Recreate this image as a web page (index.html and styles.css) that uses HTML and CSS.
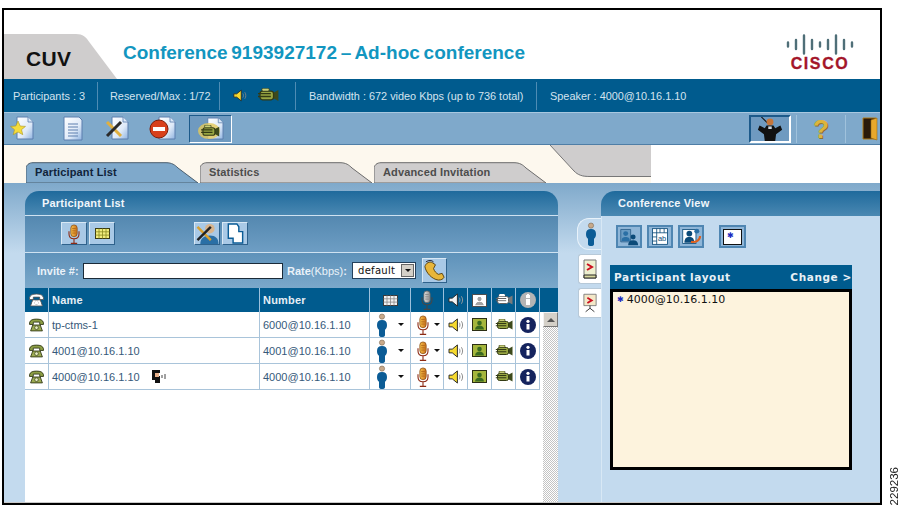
FILE: index.html
```html
<!DOCTYPE html>
<html lang="en">
<head>
<meta charset="utf-8">
<title>CUV Conference</title>
<link rel="stylesheet" href="styles.css">
</head>
<body>
<svg class="defs" width="0" height="0" aria-hidden="true">
  <defs>
    <linearGradient id="docg" x1="0" y1="0" x2="1" y2="1"><stop offset="0" stop-color="#fff"/><stop offset=".6" stop-color="#dfeaf8"/><stop offset="1" stop-color="#8fb3e0"/></linearGradient>
    <linearGradient id="micg" x1="0" y1="0" x2="1" y2="0"><stop offset="0" stop-color="#f7c24a"/><stop offset="1" stop-color="#c9701c"/></linearGradient>
    <symbol id="person" viewBox="0 0 12 24"><circle cx="6" cy="3.6" r="2.6" fill="#c8a98a" stroke="#7a6a55" stroke-width=".6"/><path d="M6 7c3.4 0 5 1.800 5 5 0 2.400-.8 4-2 4.800V22c0 1.400-1 2-3 2s-3-.6-3-2v-5.200C1.800 16 1 14.400 1 12c0-3.200 1.600-5 5-5z" fill="#0b5c96"/></symbol>
    <symbol id="mic" viewBox="0 0 14 22"><path d="M1.500 8v3c0 3.400 2.400 5.200 5.500 5.200s5.500-1.800 5.500-5.200V8M7 16v5M3.500 21.300h7" fill="none" stroke="#8c2a14" stroke-width="1.200"/><rect x="3.500" y="1" width="7" height="13" rx="3.500" fill="url(#micg)" stroke="#8a4a10" stroke-width=".8"/><path d="M5 5h4M5 7.500h4M5 10h4" stroke="#a85f14" stroke-width=".8"/></symbol>
    <symbol id="speaker" viewBox="0 0 17 15"><path d="M1 5.500h3.500L10 1v13L4.500 9.500H1z" fill="#f6d92e" stroke="#222" stroke-width="1"/><path d="M12 5c1 1.500 1 3.500 0 5M14.300 3.500c1.700 2.500 1.700 5.500 0 8" fill="none" stroke="#888" stroke-width="1"/></symbol>
    <symbol id="photo" viewBox="0 0 15 13"><rect x=".5" y=".5" width="14" height="12" fill="#a5b63c" stroke="#2b2e14"/><circle cx="7.500" cy="5" r="2.300" fill="#3a6a20"/><path d="M3 11.500c.5-3 2-4 4.500-4s4 1 4.500 4z" fill="#3a6a20"/></symbol>
    <symbol id="camera" viewBox="0 0 18 12"><path d="M13 4l4.500-2.500v9L13 8z" fill="#3d4a1c"/><rect x="2.500" y="2.500" width="11" height="7" rx="2" fill="#98a642" stroke="#333a14"/><path d="M.8 4.500h10.500M.8 6.800h10.500" stroke="#333a14" stroke-width="1.100"/><rect x="4" y="0" width="6" height="2.500" rx="1" fill="#c9d07a" stroke="#333a14" stroke-width=".7"/></symbol>
    <symbol id="info" viewBox="0 0 16 16"><circle cx="8" cy="8" r="8" fill="#14235e"/><circle cx="8" cy="4.300" r="1.600" fill="#fff"/><path d="M6.500 7h3v5.500h-3z" fill="#fff"/></symbol>
    <symbol id="phone" viewBox="0 0 14 13"><path d="M.5 4.500C1 1.800 3.500 1 7 1s6 .8 6.500 3.500v1.500h-3.500V3.800H4V6H.5z" fill="#8d9f45" stroke="#2c3314" stroke-width=".8"/><path d="M3.500 6.500h7l2 5.500h-11z" fill="#9cab52" stroke="#2c3314" stroke-width=".8"/><circle cx="7" cy="9" r="1.700" fill="#e6ecc0" stroke="#2c3314" stroke-width=".6"/></symbol>
    <symbol id="grid" viewBox="0 0 15 11"><rect x=".5" y=".5" width="14" height="10" fill="#f1ed7c" stroke="#3a3a14"/><path d="M.5 3.800h14M.5 7.100h14M4 .5v10M7.500 .5v10M11 .5v10" stroke="#8a8a20" stroke-width=".8"/></symbol>
    <symbol id="doc" viewBox="0 0 22 25"><path d="M5 1h11l5 5v17H5z" fill="url(#docg)" stroke="#5c7fae" stroke-width="1"/><path d="M16 1v5h5" fill="#dbe8f7" stroke="#5c7fae" stroke-width=".8"/></symbol>
  </defs>
</svg>

<div class="frame">
  <header class="top">
    <div class="cuv">
      <svg class="cuv-shape" viewBox="0 0 113 45" preserveAspectRatio="none" aria-hidden="true"><path d="M0 0H72C79 0 82 3 86 9L113 45H0z" fill="#cfcdcd"/></svg>
      <span class="cuv-text">CUV</span>
    </div>
    <h1 class="title">Conference 9193927172 – Ad-hoc conference</h1>
    <div class="logo">
      <svg class="logo-bars" viewBox="0 0 68 21" aria-hidden="true"><g stroke="#4f6f78" stroke-width="2.400" stroke-linecap="round"><path d="M2 8.500v4M10 6v9M18 1.500v18M26 6v9M34 8.500v4M42 6v9M50 1.500v18M58 6v9M66 8.500v4"/></g></svg>
      <span class="logo-text">CISCO</span>
    </div>
  </header>

  <div class="status">
    <div class="st st1">Participants : 3</div>
    <div class="st st2">Reserved/Max : 1/72</div>
    <div class="st st3">
      <svg class="st-spk" viewBox="0 0 17 15"><use href="#speaker"/></svg>
      <svg class="st-cam" viewBox="0 0 18 12"><use href="#camera"/></svg>
    </div>
    <div class="st st4">Bandwidth : 672 video Kbps (up to 736 total)</div>
    <div class="st st5">Speaker : 4000@10.16.1.10</div>
  </div>

  <nav class="tools">
    <div class="tool t-star">
      <svg viewBox="0 0 26 25"><use href="#doc" x="3" width="22" height="25"/><path d="M9 5l2.200 5 5.300.4-4 3.300 1.300 5L9 16l-4.800 2.700 1.300-5-4-3.300 5.300-.4z" fill="#f5dc3c" stroke="#a89626" stroke-width=".6"/></svg>
    </div>
    <div class="tool t-doc">
      <svg viewBox="0 0 20 25"><path d="M1 1h15l3 3v20H1z" fill="url(#docg)" stroke="#5c7fae"/><path d="M5 8h10M5 11h10M5 14h10M5 17h10M5 20h10" stroke="#5c7fae"/></svg>
    </div>
    <div class="tool t-x">
      <svg viewBox="0 0 24 25"><use href="#doc" x="2" width="22" height="25"/><path d="M2 6l14 14" stroke="#e0b040" stroke-width="3"/><path d="M16 6L2 20" stroke="#2a2a2a" stroke-width="3"/></svg>
    </div>
    <div class="tool t-no">
      <svg viewBox="0 0 27 25"><use href="#doc" x="5" width="22" height="25"/><circle cx="10" cy="13" r="9" fill="#d8401c" stroke="#7c1c08"/><rect x="4" y="11" width="12" height="4" fill="#fff"/></svg>
    </div>
    <div class="tool t-cam">
      <svg viewBox="0 0 26 24"><use href="#doc" x="5" width="21" height="24"/><ellipse cx="11" cy="14" rx="11" ry="8" fill="#e3c95a" opacity=".8"/><use href="#camera" x="2" y="8" width="20" height="13"/></svg>
    </div>
    <div class="tools-space"></div>
    <div class="tool t-boss">
      <svg viewBox="0 0 30 28"><path d="M5 0l7 7" stroke="#111" stroke-width="1.200"/><circle cx="15" cy="6" r="4" fill="#c4763c"/><path d="M3 10l6 3 2-3h8l2 3 6-3 2 5-7 5-1 8h-12l-1-8-7-5z" fill="#111"/><path d="M13 11h4v3h-4z" fill="#cfd8e0"/></svg>
    </div>
    <div class="tool t-help"><span class="qmark">?</span></div>
    <div class="tool t-door">
      <svg viewBox="0 0 16 24"><path d="M1 1h13v21H1z" fill="#2a1a0a" stroke="#b07a18"/><path d="M9 3l6-2v22l-6-2z" fill="#e8a82c" stroke="#9a6c14" stroke-width=".6"/></svg>
    </div>
  </nav>

  <div class="band">
    <div class="tabs">
      <div class="tab tab-on">
        <svg class="tab-shape" viewBox="0 0 172 21" preserveAspectRatio="none" aria-hidden="true"><path d="M0 21V7C0 3 3 .7 7 .7H140C146 .7 149 3 152 6L172 21z" fill="#7fa9cb" stroke="#4a5e6e"/></svg>
        <span class="tab-text">Participant List</span>
      </div>
      <div class="tab">
        <svg class="tab-shape" viewBox="0 0 172 21" preserveAspectRatio="none" aria-hidden="true"><path d="M0 21V7C0 3 3 .7 7 .7H140C146 .7 149 3 152 6L172 21z" fill="#cfcdcd" stroke="#6b6b6b"/></svg>
        <span class="tab-text">Statistics</span>
      </div>
      <div class="tab">
        <svg class="tab-shape" viewBox="0 0 172 21" preserveAspectRatio="none" aria-hidden="true"><path d="M0 21V7C0 3 3 .7 7 .7H140C146 .7 149 3 152 6L172 21z" fill="#cfcdcd" stroke="#6b6b6b"/></svg>
        <span class="tab-text">Advanced Invitation</span>
      </div>
    </div>
    <svg class="swoosh" viewBox="0 0 101 32" preserveAspectRatio="none" aria-hidden="true"><path d="M0 0H101V32H40C32 32 28 30 24 26z" fill="#cfcdcd"/><path d="M0 0L24 26C28 30 32 31.500 40 31.500H101" fill="none" stroke="#777"/></svg>
  </div>

  <main class="main">
    <section class="list">
      <div class="panel-head">Participant List</div>
      <div class="list-tools">
        <div class="btn"><svg class="i-mic" viewBox="0 0 14 22"><use href="#mic"/></svg></div>
        <div class="btn"><svg class="i-grid" viewBox="0 0 15 11"><use href="#grid"/></svg></div>
        <div class="btn btn-gap"><svg class="i-full" viewBox="0 0 24 22"><circle cx="15" cy="6" r="5" fill="#d9b48c"/><path d="M5 22c0-6 4-9 10-9s9 3 9 9z" fill="#2a6fa5"/><path d="M2 4l14 14" stroke="#d9a030" stroke-width="2.500"/><path d="M16 4L2 18" stroke="#222" stroke-width="2.500"/></svg></div>
        <div class="btn"><svg class="i-full" viewBox="0 0 24 22"><path d="M5 1h9l2 3v5h4v12H10v-5H5z" fill="#fff" stroke="#0b5c96" stroke-width="1.500"/></svg></div>
      </div>
      <div class="invite">
        <label class="inv-label">Invite #:</label>
        <div class="inv-input"></div>
        <span class="rate"><b>Rate</b>(Kbps)<b>:</b></span>
        <div class="select"><span class="select-text">default</span><span class="select-btn"></span></div>
        <div class="call"><svg viewBox="0 0 24 24"><path d="M2 8c1-4 5-6 8-4l3 2-2 4c1 3 3 5 5 6l4-1 2 4c-1 2-3 3-6 3C9 21 3 14 2 8z" fill="#e8b63a" stroke="#5a4310"/><path d="M3 3c3-2 6-2 8 0" fill="none" stroke="#223" stroke-width="1"/></svg></div>
      </div>
      <div class="thead">
        <div class="th th-i"><svg class="i-phone hd-light" viewBox="0 0 14 13"><use href="#phone"/></svg></div>
        <div class="th">Name</div>
        <div class="th">Number</div>
        <div class="th th-i"><svg class="i-grid hd-grid" viewBox="0 0 15 11"><use href="#grid"/></svg></div>
        <div class="th th-i"><svg class="i-mic hd-mid" viewBox="0 0 14 22"><use href="#mic"/></svg></div>
        <div class="th th-i"><svg class="i-spk hd-mid" viewBox="0 0 17 15"><use href="#speaker"/></svg></div>
        <div class="th th-i"><svg class="i-photo hd-light" viewBox="0 0 15 13"><use href="#photo"/></svg></div>
        <div class="th th-i"><svg class="i-cam hd-light" viewBox="0 0 18 12"><use href="#camera"/></svg></div>
        <div class="th th-i"><svg class="i-info hd-info" viewBox="0 0 16 16"><use href="#info"/></svg></div>
        <div class="th th-last"></div>
      </div>
      <div class="tbody">
        <div class="rows">
          <div class="row">
            <div class="td td-i"><svg class="i-phone" viewBox="0 0 14 13"><use href="#phone"/></svg></div>
            <div class="td">tp-ctms-1</div>
            <div class="td">6000@10.16.1.10</div>
            <div class="td td-i"><svg class="i-person" viewBox="0 0 12 24"><use href="#person"/></svg><span class="caret"></span></div>
            <div class="td td-i"><svg class="i-mic" viewBox="0 0 14 22"><use href="#mic"/></svg><span class="caret caret-m"></span></div>
            <div class="td td-i"><svg class="i-spk" viewBox="0 0 17 15"><use href="#speaker"/></svg></div>
            <div class="td td-i"><svg class="i-photo" viewBox="0 0 15 13"><use href="#photo"/></svg></div>
            <div class="td td-i"><svg class="i-cam" viewBox="0 0 18 12"><use href="#camera"/></svg></div>
            <div class="td td-i"><svg class="i-info" viewBox="0 0 16 16"><use href="#info"/></svg></div>
          </div>
          <div class="row">
            <div class="td td-i"><svg class="i-phone" viewBox="0 0 14 13"><use href="#phone"/></svg></div>
            <div class="td">4001@10.16.1.10</div>
            <div class="td">4001@10.16.1.10</div>
            <div class="td td-i"><svg class="i-person" viewBox="0 0 12 24"><use href="#person"/></svg><span class="caret"></span></div>
            <div class="td td-i"><svg class="i-mic" viewBox="0 0 14 22"><use href="#mic"/></svg><span class="caret caret-m"></span></div>
            <div class="td td-i"><svg class="i-spk" viewBox="0 0 17 15"><use href="#speaker"/></svg></div>
            <div class="td td-i"><svg class="i-photo" viewBox="0 0 15 13"><use href="#photo"/></svg></div>
            <div class="td td-i"><svg class="i-cam" viewBox="0 0 18 12"><use href="#camera"/></svg></div>
            <div class="td td-i"><svg class="i-info" viewBox="0 0 16 16"><use href="#info"/></svg></div>
          </div>
          <div class="row">
            <div class="td td-i"><svg class="i-phone" viewBox="0 0 14 13"><use href="#phone"/></svg></div>
            <div class="td">4000@10.16.1.10
              <svg class="i-talk" viewBox="0 0 16 13"><path d="M2 0h8v3H7v3h3v7H5v-3H2z" fill="#111"/><path d="M5 3h4v4H5z" fill="#e8b08a"/><path d="M12 5v3M15 4v5" stroke="#444"/></svg>
            </div>
            <div class="td">4000@10.16.1.10</div>
            <div class="td td-i"><svg class="i-person" viewBox="0 0 12 24"><use href="#person"/></svg><span class="caret"></span></div>
            <div class="td td-i"><svg class="i-mic" viewBox="0 0 14 22"><use href="#mic"/></svg><span class="caret caret-m"></span></div>
            <div class="td td-i"><svg class="i-spk" viewBox="0 0 17 15"><use href="#speaker"/></svg></div>
            <div class="td td-i"><svg class="i-photo" viewBox="0 0 15 13"><use href="#photo"/></svg></div>
            <div class="td td-i"><svg class="i-cam" viewBox="0 0 18 12"><use href="#camera"/></svg></div>
            <div class="td td-i"><svg class="i-info" viewBox="0 0 16 16"><use href="#info"/></svg></div>
          </div>
        </div>
        <div class="scroll"><div class="scroll-btn"></div></div>
      </div>
    </section>

    <aside class="vtabs">
      <div class="vtab vtab-on"><svg class="i-vperson" viewBox="0 0 12 24"><use href="#person"/></svg></div>
      <div class="vtab"><svg class="i-vdoc" viewBox="0 0 14 24"><path d="M1 3h12v18H1z" fill="#eef0d0" stroke="#777"/><path d="M1 18h12v3H1z" fill="#d8d8a0" stroke="#222"/><path d="M4 7l5 3-5 3" fill="none" stroke="#cc1020" stroke-width="2"/></svg></div>
      <div class="vtab"><svg class="i-vdoc" viewBox="0 0 16 24"><path d="M1 2h14v13H1z" fill="#f4e8c8" stroke="#777"/><path d="M5 6l5 3-5 3" fill="none" stroke="#cc1020" stroke-width="2"/><path d="M8 15v3M3 22l5-4 5 4" fill="none" stroke="#222"/></svg></div>
    </aside>

    <section class="view">
      <div class="panel-head view-head">Conference View</div>
      <div class="view-body">
        <div class="view-tools">
          <div class="vbtn"><svg viewBox="0 0 26 23"><path d="M3 3h12v15H3z" fill="#6a9cc4" stroke="#2a5f8a"/><circle cx="9" cy="8" r="3" fill="#2a6fa5"/><path d="M4 17c0-4 2-5 5-5s5 1 5 5z" fill="#2a6fa5"/><circle cx="18" cy="12" r="3" fill="#0b4a78"/><path d="M12 22c0-4 2-6 6-6s6 2 6 6z" fill="#0b4a78"/></svg></div>
          <div class="vbtn"><svg viewBox="0 0 26 23"><rect x="4" y="2" width="18" height="19" fill="#fff" stroke="#0b4a78"/><path d="M4 7h18M4 12h5M4 17h5M9 2v19M13 2v5M18 2v5" stroke="#0b4a78"/><text class="ab" x="10.500" y="17">ab</text></svg></div>
          <div class="vbtn"><svg viewBox="0 0 26 23"><rect x="3" y="3" width="16" height="17" fill="#fff" stroke="#0b4a78"/><circle cx="11" cy="8" r="3.500" fill="#0b4a78"/><path d="M5 19c0-5 2-7 6-7s6 2 6 7z" fill="#0b4a78"/><circle cx="20" cy="5" r="3" fill="#2a6fa5"/><path d="M24 11c0 5-5 8-11 7" fill="none" stroke="#e0601c" stroke-width="2.500"/></svg></div>
          <div class="vbtn vbtn-gap"><div class="star-box"><span class="star">✱</span></div></div>
        </div>
        <div class="layout-head"><span>Participant layout</span><span>Change &gt;</span></div>
        <div class="layout-box"><span class="star">✱</span><span>4000@10.16.1.10</span></div>
      </div>
    </section>
  </main>
</div>
<div class="code">229236</div>
</body>
</html>
```
FILE: styles.css
```css
* { box-sizing: border-box; }
html, body { margin: 0; padding: 0; }
body {
  width: 902px;
  height: 507px;
  overflow: hidden;
  background: #fff;
  display: flex;
  align-items: flex-start;
  font-family: "Liberation Sans", Arial, sans-serif;
}
.defs { display: block; width: 0; height: 0; flex: none; }
svg { display: block; flex: none; }

.frame {
  width: 880px;
  height: 497px;
  margin: 8px 0 0 2px;
  border: 2px solid #000;
  display: flex;
  flex-direction: column;
  overflow: hidden;
  flex: none;
}
.code {
  writing-mode: vertical-rl;
  transform: rotate(180deg);
  font-size: 11.500px;
  color: #222;
  align-self: flex-end;
  margin: 0 0 2px 6px;
}

/* header */
.top { height: 69px; display: flex; align-items: flex-end; background: #fff; flex: none; }
.cuv { position: relative; width: 113px; height: 45px; flex: none; }
.cuv-shape { position: absolute; inset: 0; width: 100%; height: 100%; }
.cuv-text { position: absolute; left: 22px; top: 13px; font-size: 21px; font-weight: bold; color: #111; letter-spacing: .3px; }
.title {
  margin: 0 0 14px 6px;
  font-size: 19px;
  font-weight: bold;
  color: #1296c0;
  line-height: 24px;
  white-space: nowrap;
  width: 663px;
  word-spacing: -1.500px;
}
.logo { width: 68px; margin-bottom: 8px; display: flex; flex-direction: column; align-items: center; flex: none; }
.logo-bars { width: 68px; height: 21px; margin-bottom: 2px; }
.logo-text { font-size: 16px; font-weight: bold; color: #a3162a; letter-spacing: 1.600px; line-height: 14px; -webkit-text-stroke: .3px #a3162a; }

/* status */
.status {
  height: 33px;
  background: #005b8e;
  display: flex;
  align-items: center;
  color: #d4e3ef;
  font-size: 10.900px;
  flex: none;
}
.st { height: 28px; display: flex; align-items: center; border-right: 1px solid #4e8cb4; white-space: nowrap; flex: none; }
.st1 { width: 94px; padding-left: 9px; }
.st2 { width: 122px; padding-left: 12px; }
.st3 { width: 76px; padding-left: 13px; gap: 10px; }
.st4 { width: 241px; padding-left: 13px; }
.st5 { border-right: 0; padding-left: 13px; }
.st-spk { width: 14px; height: 13px; }
.st-cam { width: 22px; height: 15px; }

/* toolbar */
.tools {
  height: 33px;
  background: #7fa9cb;
  border-top: 1px solid #a8c8e0;
  border-bottom: 1px solid #4f7ea6;
  display: flex;
  align-items: center;
  flex: none;
}
.tool { flex: none; display: flex; align-items: center; justify-content: center; height: 28px; }
.t-star { width: 26px; margin-left: 5px; }
.t-star svg { width: 26px; height: 25px; }
.t-doc { width: 20px; margin-left: 28px; }
.t-doc svg { width: 20px; height: 25px; }
.t-x { width: 24px; margin-left: 22px; }
.t-x svg { width: 24px; height: 25px; }
.t-no { width: 27px; margin-left: 20px; }
.t-no svg { width: 27px; height: 25px; }
.t-cam { width: 43px; margin-left: 13px; background: #6f9ac0; border: 1px solid; border-color: #1d5a8a #fff #fff #1d5a8a; }
.t-cam svg { width: 26px; height: 24px; }
.tools-space { flex: 1; }
.t-boss { width: 42px; background: #6f9ac0; border: 2px solid; border-color: #1d5a8a #fff #fff #1d5a8a; overflow: hidden; }
.t-boss svg { width: 26px; height: 26px; }
.t-help { width: 50px; margin-left: 5px; border-left: 1px solid #a0c2dc; border-right: 1px solid #a0c2dc; }
.qmark { font-size: 26px; font-weight: bold; color: #dcb43c; line-height: 28px; text-shadow: 1px 1px 0 #8a7030; }
.t-door { width: 34px; justify-content: flex-start; padding-left: 16px; }
.t-door svg { width: 16px; height: 24px; }

/* band with tabs */
.band {
  height: 38px;
  display: flex;
  align-items: flex-start;
  background: linear-gradient(90deg, #fdf8ee 647px, #fff 647px);
  flex: none;
}
.tabs { width: 546px; height: 38px; padding: 17px 0 0 22px; display: flex; gap: 2px; flex: none; }
.tab { position: relative; width: 172px; height: 21px; flex: none; }
.tab-shape { position: absolute; inset: 0; width: 100%; height: 100%; }
.tab-text { position: absolute; left: 9px; top: 4px; font-size: 11px; font-weight: bold; color: #4c4c4c; letter-spacing: .15px; white-space: nowrap; }
.tab-on .tab-text { color: #10233a; }
.swoosh { width: 101px; height: 32px; flex: none; }

/* main */
.main {
  flex: 1;
  min-height: 0;
  display: flex;
  padding: 8px 0 0 21px;
  background: linear-gradient(#7fa9cb, #c3daee 70px);
  border-bottom: 1px solid #c9c9c9;
}
.list { width: 533px; display: flex; flex-direction: column; flex: none; }
.panel-head {
  height: 25px;
  line-height: 24px;
  padding-left: 17px;
  font-size: 11px;
  font-weight: bold;
  letter-spacing: .2px;
  color: #f0f6fb;
  background: linear-gradient(#1f6a9c, #4a88b2);
  border-radius: 14px 14px 0 0;
  border-bottom: 1px solid #cfe2f1;
  flex: none;
}
.list-tools {
  height: 37px;
  padding: 6px 0 0 36px;
  display: flex;
  gap: 2px;
  background: linear-gradient(#5488b0, #6e9ec4);
  border-bottom: 1px solid #cfe2f1;
  flex: none;
}
.btn {
  width: 26px;
  height: 23px;
  display: flex;
  align-items: center;
  justify-content: center;
  background: #a9c9e6;
  border: 1px solid;
  border-color: #d8e8f5 #2f628c #2f628c #d8e8f5;
  flex: none;
}
.btn-gap { margin-left: 77px; }
.i-full { width: 24px; height: 21px; }

.invite {
  height: 35px;
  display: flex;
  align-items: center;
  padding-left: 12px;
  background: linear-gradient(#5e92ba, #7ba8ca);
  flex: none;
}
.inv-label { width: 46px; font-size: 11px; font-weight: bold; color: #eaf2f9; white-space: nowrap; }
.inv-input { width: 200px; height: 16px; background: #fff; border: 1px solid #1a2a38; flex: none; }
.rate { width: 69px; padding-left: 4px; font-size: 11px; color: #eaf2f9; white-space: nowrap; flex: none; }
.select { width: 64px; height: 17px; background: #fff; border: 1px solid #24415c; display: flex; align-items: center; justify-content: space-between; padding: 0 1px 0 5px; flex: none; }
.select-text { font-family: "DejaVu Sans", sans-serif; font-size: 10px; color: #111; letter-spacing: .3px; }
.select-btn { width: 13px; height: 13px; background: #d4d0c8; border: 1px solid #666; display: flex; align-items: center; justify-content: center; }
.select-btn::after { content: ""; border: 3px solid transparent; border-top-color: #111; border-bottom: 0; }
.call { width: 25px; height: 25px; margin-left: 6px; background: #a9c9e6; border: 1px solid; border-color: #d8e8f5 #2f628c #2f628c #d8e8f5; display: flex; align-items: center; justify-content: center; flex: none; }
.call svg { width: 23px; height: 23px; }

.thead {
  height: 24px;
  display: grid;
  grid-template-columns: 24px 211px 110px 41px 33px 24px 24px 24px 24px 18px;
  background: #005b8e;
  flex: none;
}
.th {
  display: flex;
  align-items: center;
  padding-left: 3px;
  color: #e6eff6;
  font-size: 11px;
  font-weight: bold;
  letter-spacing: .2px;
  border-right: 1px solid #9cc0dc;
}
.th-i { justify-content: center; padding-left: 0; }
.hd-light { filter: grayscale(1) brightness(1.8); }
.hd-mid { filter: grayscale(1) brightness(1.15); }
.hd-grid { filter: grayscale(1) brightness(1.05); }
.hd-info { filter: grayscale(1) brightness(5); }
.th-last { border-right: 0; }

.tbody { flex: 1; display: flex; background: #fff; min-height: 0; }
.rows { width: 515px; flex: none; }
.row {
  height: 26px;
  display: grid;
  grid-template-columns: 24px 211px 110px 41px 33px 24px 24px 24px 24px;
  border-bottom: 1px solid #a9c4da;
}
.td {
  display: flex;
  align-items: center;
  gap: 10px;
  padding-left: 3px;
  font-size: 11px;
  color: #36597a;
  border-right: 1px solid #a9c4da;
  white-space: nowrap;
}
.td-i { justify-content: center; padding-left: 0; gap: 0; }
.i-phone { width: 15px; height: 14px; }
.i-person { width: 12px; height: 24px; margin-right: 10px; }
.i-mic { width: 14px; height: 20px; }
.i-spk { width: 16px; height: 14px; }
.i-photo { width: 15px; height: 13px; }
.i-cam { width: 18px; height: 12px; }
.i-info { width: 16px; height: 16px; }
.i-grid { width: 15px; height: 11px; }
.i-talk { width: 16px; height: 13px; }
.caret { width: 0; height: 0; border: 3.500px solid transparent; border-top-color: #111; border-bottom: 0; flex: none; }
.caret-m { margin-left: 4px; margin-right: -2px; }

.scroll {
  width: 15px;
  margin-left: 3px;
  background-color: #fff;
  background-image: repeating-conic-gradient(#c4c4c4 0 25%, #fff 0 50%);
  background-size: 2px 2px;
  flex: none;
}
.scroll-btn {
  height: 15px;
  background: #d4d0c8;
  border: 1px solid;
  border-color: #f2f2f2 #777 #777 #f2f2f2;
  display: flex;
  align-items: center;
  justify-content: center;
}
.scroll-btn::after { content: ""; border: 4px solid transparent; border-bottom-color: #555; border-top: 0; }

/* side tabs */
.vtabs { width: 43px; padding: 29px 0 0 20px; display: flex; flex-direction: column; gap: 4px; flex: none; }
.vtab { width: 23px; height: 30px; background: #fff; border-radius: 3px 0 0 3px; display: flex; align-items: center; justify-content: center; flex: none; border: 1px solid #b7c9d8; border-right: 0; }
.vtab-on { background: #c3daee; border-radius: 12px 0 0 12px; margin-left: -1px; width: 24px; height: 32px; margin-top: -2px; border-color: #e8f2fa; padding-left: 3px; }
.i-vperson { width: 12px; height: 24px; }
.i-vdoc { width: 14px; height: 24px; }

/* conference view */
.view { flex: 1; display: flex; flex-direction: column; min-width: 0; }
.view-head { border-radius: 14px 0 0 0; border-bottom: 0; }
.view-body { flex: 1; border-left: 1px solid #d8e8f5; background: #c3daee; padding: 9px 0 0 8px; }
.view-tools { display: flex; gap: 5px; height: 40px; padding-left: 6px; }
.vbtn { width: 26px; height: 23px; background: #8fb6d8; border: 2px solid #4f86b2; display: flex; align-items: center; justify-content: center; flex: none; }
.vbtn svg { width: 22px; height: 19px; }
.vbtn-gap { margin-left: 10px; width: 27px; }
.ab { font-family: "Liberation Sans", sans-serif; font-size: 9px; fill: #0b4a78; }
.star-box { width: 19px; height: 16px; background: #fff; border: 1px solid #111; display: flex; padding-left: 3px; line-height: 11px; }
.star { color: #1a2cc0; font-family: "DejaVu Sans", sans-serif; font-size: 8px; }
.layout-head {
  width: 242px;
  height: 24px;
  background: #005b8e;
  color: #e8f0f6;
  display: flex;
  align-items: center;
  justify-content: space-between;
  padding-left: 4px;
  font-family: "DejaVu Sans", sans-serif;
  font-size: 10.500px;
  font-weight: bold;
  letter-spacing: .6px;
  white-space: nowrap;
}
.layout-box {
  width: 242px;
  height: 181px;
  background: #fdf3dd;
  border: 3px solid #000;
  padding: 1px 0 0 4px;
  display: flex;
  align-items: flex-start;
  gap: 3px;
  font-family: "DejaVu Sans", sans-serif;
  font-size: 11px;
  line-height: 14px;
  color: #111;
  white-space: nowrap;
}
```
